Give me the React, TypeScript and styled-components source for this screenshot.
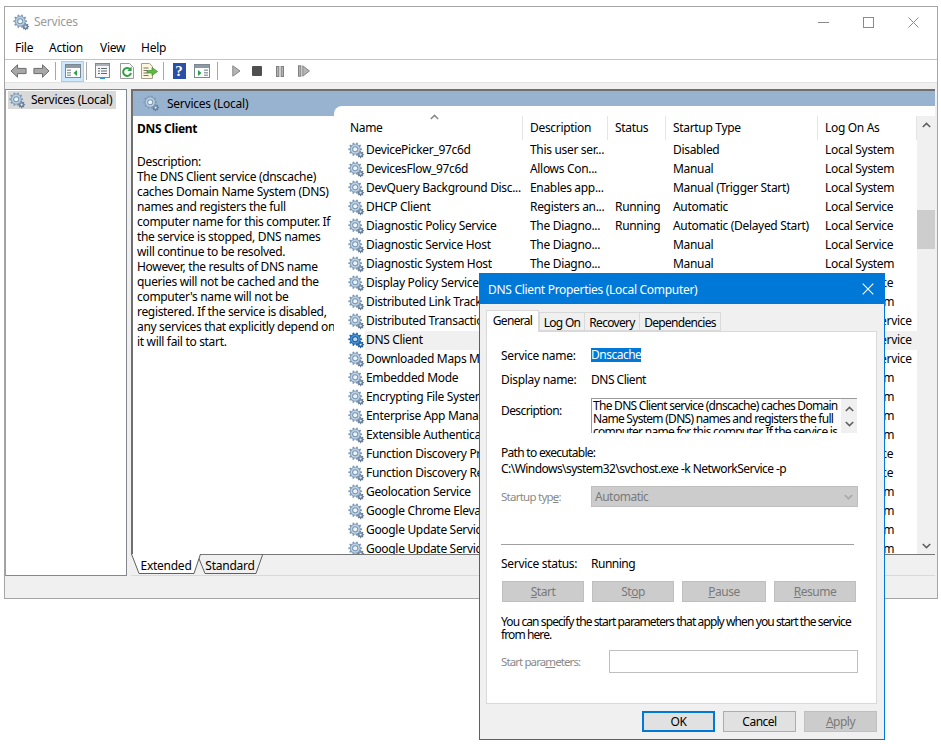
import React from 'react';
import styled, { createGlobalStyle } from 'styled-components';

const font = `"Noto Sans", "Open Sans", sans-serif`;

const GlobalStyle = createGlobalStyle`
  html, body {
    margin: 0;
    padding: 0;
    background: #fff;
    font-family: ${font};
    font-size: 12px;
    letter-spacing: -0.25px;
    color: #000;
  }
  #root {
    position: relative;
    width: 941px;
    height: 744px;
    overflow: hidden;
  }
`;

type Service = {
  name: string;
  desc?: string;
  status?: string;
  startup?: string;
  logon: string;
  selected?: boolean;
};

const services: Service[] = [
  { name: 'DevicePicker_97c6d', desc: 'This user ser...', startup: 'Disabled', logon: 'Local System' },
  { name: 'DevicesFlow_97c6d', desc: 'Allows Con...', startup: 'Manual', logon: 'Local System' },
  { name: 'DevQuery Background Disc...', desc: 'Enables app...', startup: 'Manual (Trigger Start)', logon: 'Local System' },
  { name: 'DHCP Client', desc: 'Registers an...', status: 'Running', startup: 'Automatic', logon: 'Local Service' },
  { name: 'Diagnostic Policy Service', desc: 'The Diagno...', status: 'Running', startup: 'Automatic (Delayed Start)', logon: 'Local Service' },
  { name: 'Diagnostic Service Host', desc: 'The Diagno...', startup: 'Manual', logon: 'Local Service' },
  { name: 'Diagnostic System Host', desc: 'The Diagno...', startup: 'Manual', logon: 'Local System' },
  { name: 'Display Policy Service', logon: 'Local Service' },
  { name: 'Distributed Link Tracking Client', logon: 'Local System' },
  { name: 'Distributed Transaction Coordinator', logon: 'Network Service' },
  { name: 'DNS Client', logon: 'Network Service', selected: true },
  { name: 'Downloaded Maps Manager', logon: 'Network Service' },
  { name: 'Embedded Mode', logon: 'Local System' },
  { name: 'Encrypting File System (EFS)', logon: 'Local System' },
  { name: 'Enterprise App Management', logon: 'Local System' },
  { name: 'Extensible Authentication', logon: 'Local System' },
  { name: 'Function Discovery Provider', logon: 'Local Service' },
  { name: 'Function Discovery Resource', logon: 'Local Service' },
  { name: 'Geolocation Service', logon: 'Local System' },
  { name: 'Google Chrome Elevation', logon: 'Local System' },
  { name: 'Google Update Service', logon: 'Local System' },
  { name: 'Google Update Service', logon: 'Local System' },
];

const descriptionLines = [
  'The DNS Client service (dnscache)',
  'caches Domain Name System (DNS)',
  'names and registers the full',
  'computer name for this computer. If',
  'the service is stopped, DNS names',
  'will continue to be resolved.',
  'However, the results of DNS name',
  'queries will not be cached and the',
  "computer's name will not be",
  'registered. If the service is disabled,',
  'any services that explicitly depend on',
  'it will fail to start.',
];

const gearPath = (cx: number, cy: number, outer: number, inner: number, teeth: number) => {
  const pts: string[] = [];
  const step = (Math.PI * 2) / teeth;
  for (let i = 0; i < teeth; i++) {
    const a = i * step;
    const corners: [number, number][] = [
      [a - step * 0.3, inner],
      [a - step * 0.16, outer],
      [a + step * 0.16, outer],
      [a + step * 0.3, inner],
    ];
    corners.forEach(([t, r]) => {
      pts.push(`${(cx + Math.cos(t) * r).toFixed(2)} ${(cy + Math.sin(t) * r).toFixed(2)}`);
    });
  }
  return `M${pts.join('L')}Z`;
};

const GearIcon = ({ selected }: { selected?: boolean }) => (
  <GearSvg viewBox="0 0 17 17" width={17} height={17}>
    <path d={gearPath(12.6, 12.6, 3.6, 2.7, 8)} fill={selected ? '#245f9e' : '#6b8199'} />
    <circle cx={12.6} cy={12.6} r={1.1} fill="#e4edf5" />
    <path d={gearPath(7.2, 7.2, 6.9, 5.4, 10)} fill={selected ? '#1f67b0' : '#7f9ab5'} />
    <circle cx={7.2} cy={7.2} r={4.6} fill={selected ? '#4f90cf' : '#bcd0e2'} />
    <circle cx={7.2} cy={7.2} r={3} fill={selected ? '#1d5c9e' : '#7595b3'} />
    <circle cx={7.2} cy={7.2} r={2} fill={selected ? '#bcd8f0' : '#eef3f8'} />
  </GearSvg>
);

const GearSvg = styled.svg`
  display: block;
  flex: none;
`;

const NavArrow = ({ flip }: { flip?: boolean }) => (
  <svg width={17} height={14} viewBox="0 0 17 14" style={flip ? { transform: 'scaleX(-1)' } : undefined}>
    <path d="M7.5.8 1 7l6.5 6.2V9.6h8.6V4.4H7.5z" fill="#a8a8a8" stroke="#6d6d6d" />
  </svg>
);

const ConsoleTreeIcon = () => (
  <svg width={16} height={14} viewBox="0 0 16 14">
    <rect x=".5" y=".5" width="15" height="13" fill="#fff" stroke="#7c8791" />
    <rect x="1" y="1" width="14" height="3" fill="#8d9aa6" />
    <rect x="2" y="5.5" width="4" height="1.5" fill="#9aa5af" />
    <rect x="2" y="8" width="4" height="1.5" fill="#9aa5af" />
    <rect x="2" y="10.5" width="4" height="1.5" fill="#9aa5af" />
    <path d="M12 6v6L8.5 9z" fill="#2f9e44" />
  </svg>
);

const ListIcon = () => (
  <svg width={15} height={16} viewBox="0 0 15 16">
    <rect x=".5" y=".5" width="14" height="14" fill="#f6f6f6" stroke="#7f8790" />
    <rect x="1" y="1" width="13" height="2" fill="#aab2ba" />
    <path d="M3 5.5h2M6 5.5h6M3 8h2M6 8h6M3 10.5h2M6 10.5h6" stroke="#5f6b78" />
    <rect x="5" y="14" width="5" height="2" fill="#2c9be0" />
  </svg>
);

const RefreshIcon = () => (
  <svg width={14} height={16} viewBox="0 0 14 16">
    <path d="M.5.5h9l4 4v11H.5z" fill="#fbfbfb" stroke="#9a9a9a" />
    <path d="M10.3 6.4A4 4 0 1 0 11 10" fill="none" stroke="#2f9e44" strokeWidth="2" />
    <path d="M11.6 3.5v4.4H7.4z" fill="#2f9e44" />
  </svg>
);

const ExportIcon = () => (
  <svg width={17} height={16} viewBox="0 0 17 16">
    <path d="M.5.5h8l3 3v12h-11z" fill="#fdf6dc" stroke="#a3a08e" />
    <path d="M2.5 5h5M2.5 7.5h4M2.5 10h4M2.5 12.5h5" stroke="#77756a" />
    <path d="M6 7.5h5V4.5l5.5 4-5.5 4V10H6z" fill="#62b946" stroke="#3c8f2a" strokeWidth=".7" />
  </svg>
);

const ViewIcon = () => (
  <svg width={16} height={14} viewBox="0 0 16 14">
    <rect x=".5" y=".5" width="15" height="13" fill="#fff" stroke="#7c8791" />
    <rect x="1" y="1" width="14" height="3" fill="#8d9aa6" />
    <rect x="10" y="5.5" width="4" height="1.5" fill="#9aa5af" />
    <rect x="10" y="8" width="4" height="1.5" fill="#9aa5af" />
    <rect x="10" y="10.5" width="4" height="1.5" fill="#9aa5af" />
    <path d="M4 6v6l3.5-3z" fill="#2f9e44" />
  </svg>
);

const PlayIcon = () => (
  <svg width={9} height={12} viewBox="0 0 9 12">
    <path d="M.8.8 8 6 .8 11.2z" fill="#b5b5b5" stroke="#858585" />
  </svg>
);

const StopIcon = () => (
  <svg width={10} height={10} viewBox="0 0 10 10">
    <rect width="10" height="10" rx="1" fill="#4f4f4f" />
  </svg>
);

const PauseIcon = () => (
  <svg width={8} height={11} viewBox="0 0 8 11">
    <rect x=".5" y=".5" width="2.4" height="10" fill="#b0b0b0" stroke="#808080" />
    <rect x="5.1" y=".5" width="2.4" height="10" fill="#b0b0b0" stroke="#808080" />
  </svg>
);

const ResumeIcon = () => (
  <svg width={12} height={12} viewBox="0 0 12 12">
    <rect x=".5" y=".8" width="2.4" height="10.4" fill="#b0b0b0" stroke="#808080" />
    <path d="M4.8.8 11.4 6l-6.6 5.2z" fill="#b5b5b5" stroke="#858585" />
  </svg>
);

const Chevron = ({ up, color = '#606060' }: { up?: boolean; color?: string }) => (
  <svg width={9} height={6} viewBox="0 0 9 6" style={{ display: 'block' }}>
    <path d={up ? 'M.8 5 4.5 1.4 8.2 5' : 'M.8 1 4.5 4.6 8.2 1'} fill="none" stroke={color} strokeWidth="1.6" />
  </svg>
);

const TabOutline = ({ w, active }: { w: number; active?: boolean }) => (
  <TabSvg width={w} height={20} viewBox={`0 0 ${w} 20`}>
    <path
      d={`M.5 ${active ? 0 : 1} L8 19.5 H${w - 7} L${w - 0.5} ${active ? 0 : 1}`}
      fill={active ? '#fff' : '#f0f0f0'}
      stroke="#5f5f5f"
    />
  </TabSvg>
);

const TabSvg = styled.svg`
  position: absolute;
  left: 0;
  top: 0;
`;

export default function App() {
  return (
    <>
      <GlobalStyle />
      <Window>
        <TitleBar>
          <TitleIcon><GearIcon /></TitleIcon>
          <TitleText>Services</TitleText>
          <WindowControls>
            <svg width={11} height={11} viewBox="0 0 11 11"><path d="M0 5.5h11" stroke="#8a8a8a" /></svg>
            <svg width={11} height={11} viewBox="0 0 11 11"><rect x=".5" y=".5" width="10" height="10" fill="none" stroke="#8a8a8a" /></svg>
            <svg width={11} height={11} viewBox="0 0 11 11"><path d="M.5.5l10 10M10.5.5l-10 10" stroke="#8a8a8a" /></svg>
          </WindowControls>
        </TitleBar>
        <MenuBar>
          <MenuItem $w={34}>File</MenuItem>
          <MenuItem $w={51}>Action</MenuItem>
          <MenuItem $w={41}>View</MenuItem>
          <MenuItem $w={40}>Help</MenuItem>
        </MenuBar>
        <Toolbar>
          <ToolSlot $w={23}><NavArrow /></ToolSlot>
          <ToolSlot $w={23}><NavArrow flip /></ToolSlot>
          <ToolSep />
          <ActiveTool><ConsoleTreeIcon /></ActiveTool>
          <ToolSep />
          <ToolSlot $w={21}><ListIcon /></ToolSlot>
          <ToolSlot $w={27}><RefreshIcon /></ToolSlot>
          <ToolSlot $w={18}><ExportIcon /></ToolSlot>
          <ToolSlot $w={3} />
          <ToolSep />
          <ToolSlot $w={20}><HelpBox>?</HelpBox></ToolSlot>
          <ToolSlot $w={26}><ViewIcon /></ToolSlot>
          <ToolSep />
          <ToolSlot $w={26}><PlayIcon /></ToolSlot>
          <ToolSlot $w={16}><StopIcon /></ToolSlot>
          <ToolSlot $w={30}><PauseIcon /></ToolSlot>
          <ToolSlot $w={18}><ResumeIcon /></ToolSlot>
        </Toolbar>
        <Body>
          <TreePane>
            <TreeItem>
              <GearIcon />
              <span>Services (Local)</span>
            </TreeItem>
          </TreePane>
          <ResultPane>
            <ResultHeader>
              <GearIcon />
              <span>Services (Local)</span>
            </ResultHeader>
            <ResultContent>
              <DescriptionPane>
                <ServiceTitle>DNS Client</ServiceTitle>
                <div>Description:</div>
                {descriptionLines.map((line) => (
                  <DescriptionLine key={line}>{line}</DescriptionLine>
                ))}
              </DescriptionPane>
              <ListPanel>
                <ListColumn>
                  <ColumnHeaders>
                    <SortCaret><Chevron up color="#8a8a8a" /></SortCaret>
                    <HeaderCell $w={189} $pad={16}>Name</HeaderCell>
                    <HeaderCell $w={85}>Description</HeaderCell>
                    <HeaderCell $w={58}>Status</HeaderCell>
                    <HeaderCell $w={152}>Startup Type</HeaderCell>
                    <HeaderCell $w={99}>Log On As</HeaderCell>
                  </ColumnHeaders>
                  <Rows>
                    {services.map((s, i) => (
                      <Row key={`${s.name}-${i}`}>
                        <NameCell $selected={s.selected}>
                          <GearIcon selected={s.selected} />
                          <NameText>{s.name}</NameText>
                        </NameCell>
                        <Cell $w={85} $selected={s.selected}>{s.desc}</Cell>
                        <Cell $w={58} $selected={s.selected}>{s.status}</Cell>
                        <Cell $w={152} $selected={s.selected}>{s.startup}</Cell>
                        <Cell $w={99} $selected={s.selected}>{s.logon}</Cell>
                      </Row>
                    ))}
                  </Rows>
                </ListColumn>
                <ScrollBar>
                  <ScrollArrow><Chevron up /></ScrollArrow>
                  <ScrollTrack>
                    <ScrollThumb />
                  </ScrollTrack>
                  <ScrollArrow><Chevron /></ScrollArrow>
                </ScrollBar>
              </ListPanel>
            </ResultContent>
            <TabStrip>
              <ViewTab $w={70} $active>
                <TabOutline w={70} active />
                <TabLabel>Extended</TabLabel>
              </ViewTab>
              <ViewTab $w={66}>
                <TabOutline w={66} />
                <TabLabel>Standard</TabLabel>
              </ViewTab>
            </TabStrip>
          </ResultPane>
        </Body>
        <StatusBar />
      </Window>

      <Dialog>
        <DialogTitle>
          <span>DNS Client Properties (Local Computer)</span>
          <svg width={12} height={12} viewBox="0 0 12 12"><path d="M.7.7l10.6 10.6M11.3.7.7 11.3" stroke="#fff" strokeWidth="1.1" /></svg>
        </DialogTitle>
        <DialogBody>
          <DialogTabs>
            <DialogTab $active $w={53}>General</DialogTab>
            <DialogTab $w={46}>Log On</DialogTab>
            <DialogTab $w={56}>Recovery</DialogTab>
            <DialogTab $w={82}>Dependencies</DialogTab>
          </DialogTabs>
          <TabPanel>
            <FieldRow $h={24} $top={11}>
              <FieldLabel>Service name:</FieldLabel>
              <SelectedText>Dnscache</SelectedText>
            </FieldRow>
            <FieldRow $h={24}>
              <FieldLabel>Display name:</FieldLabel>
              <span>DNS Client</span>
            </FieldRow>
            <DescriptionField>
              <FieldLabel>Description:</FieldLabel>
              <DescriptionBox>
                <DescriptionBoxText>
                  The DNS Client service (dnscache) caches Domain<br />
                  Name System (DNS) names and registers the full<br />
                  computer name for this computer. If the service is
                </DescriptionBoxText>
                <BoxScroll>
                  <Chevron up />
                  <Chevron />
                </BoxScroll>
              </DescriptionBox>
            </DescriptionField>
            <PathLabel>Path to executable:</PathLabel>
            <PathValue>C:\Windows\system32\svchost.exe -k NetworkService -p</PathValue>
            <StartupRow>
              <DisabledLabel>Startup typ<u>e</u>:</DisabledLabel>
              <SelectBox>
                <span>Automatic</span>
                <Chevron color="#a8a8a8" />
              </SelectBox>
            </StartupRow>
            <Divider />
            <FieldRow $h={20}>
              <FieldLabel>Service status:</FieldLabel>
              <span>Running</span>
            </FieldRow>
            <ControlRow>
              <DisabledButton $w={82}><u>S</u>tart</DisabledButton>
              <DisabledButton $w={82}>St<u>o</u>p</DisabledButton>
              <DisabledButton $w={84}><u>P</u>ause</DisabledButton>
              <DisabledButton $w={82}><u>R</u>esume</DisabledButton>
            </ControlRow>
            <HelpText>
              You can specify the start parameters that apply when you start the service<br />
              from here.
            </HelpText>
            <ParamRow>
              <ParamLabel>Start para<u>m</u>eters:</ParamLabel>
              <ParamInput />
            </ParamRow>
          </TabPanel>
          <DialogFooter>
            <FooterButton $primary>OK</FooterButton>
            <FooterButton>Cancel</FooterButton>
            <FooterButton $disabled><u>A</u>pply</FooterButton>
          </DialogFooter>
        </DialogBody>
      </Dialog>
    </>
  );
}

const Window = styled.div`
  position: absolute;
  left: 4px;
  top: 6px;
  width: 934px;
  height: 593px;
  box-sizing: border-box;
  border: 1px solid #a5a5a5;
  background: #fff;
  display: flex;
  flex-direction: column;
`;

const TitleBar = styled.div`
  height: 30px;
  margin-bottom: 1px;
  display: flex;
  align-items: center;
  flex: none;
`;

const TitleIcon = styled.div`
  margin-left: 8px;
  margin-right: 4px;
`;

const TitleText = styled.div`
  color: #9a9a9a;
  flex: 1;
  margin-top: -1px;
`;

const WindowControls = styled.div`
  display: flex;
  gap: 34px;
  margin-right: 18px;
  align-items: center;
`;

const MenuBar = styled.div`
  height: 19px;
  padding-bottom: 2px;
  flex: none;
  display: flex;
  align-items: center;
  padding-left: 10px;
  border-bottom: 1px solid #c4c4c4;
`;

const MenuItem = styled.div<{ $w: number }>`
  width: ${(p) => p.$w}px;
  flex: none;
`;

const Toolbar = styled.div`
  height: 22px;
  flex: none;
  display: flex;
  align-items: center;
  padding-left: 2px;
  border-bottom: 1px solid #e3e3e3;
`;

const ToolSlot = styled.div<{ $w: number }>`
  width: ${(p) => p.$w}px;
  height: 22px;
  display: flex;
  align-items: center;
  justify-content: center;
  flex: none;
`;

const ToolSep = styled.div`
  width: 1px;
  height: 18px;
  margin: 0 5px 0 2px;
  background: #a8a8a8;
  flex: none;
`;

const ActiveTool = styled.div`
  width: 23px;
  height: 21px;
  box-sizing: border-box;
  border: 1px solid #99d1ff;
  background: #cce8ff;
  display: flex;
  align-items: center;
  justify-content: center;
  flex: none;
`;

const HelpBox = styled.div`
  width: 13px;
  height: 16px;
  background: #2a4fa8;
  color: #fff;
  font: bold 15px/16px "Liberation Serif", serif;
  text-align: center;
  letter-spacing: 0;
`;

const Body = styled.div`
  flex: 1;
  min-height: 0;
  display: flex;
  background: #f0f0f0;
  padding-top: 6px;
`;

const TreePane = styled.div`
  width: 122px;
  box-sizing: border-box;
  margin-right: 4px;
  background: #fff;
  border: 1px solid #828790;
  border-left-color: #a0a0a0;
  padding: 1px;
  flex: none;
`;

const TreeItem = styled.div`
  height: 18px;
  width: 108px;
  margin-left: 1px;
  background: #d9d9d9;
  display: flex;
  align-items: center;
  gap: 5px;
  padding-left: 1px;
  box-sizing: border-box;
  line-height: 16px;
  white-space: nowrap;
`;

const ResultPane = styled.div`
  flex: 1;
  min-width: 0;
  display: flex;
  flex-direction: column;
  border-top: 2px solid #6f6f6f;
  border-left: 2px solid #6f6f6f;
  margin-right: 2px;
`;

const ResultHeader = styled.div`
  height: 25px;
  flex: none;
  box-sizing: border-box;
  background: #98b3d0;
  display: flex;
  align-items: center;
  gap: 7px;
  padding-left: 10px;
`;

const ResultContent = styled.div`
  flex: 1;
  min-height: 0;
  display: flex;
  background: #fff;
`;

const DescriptionPane = styled.div`
  width: 201px;
  box-sizing: border-box;
  flex: none;
  padding: 5px 0 0 4px;
  line-height: 15px;
  letter-spacing: -0.32px;
`;

const ServiceTitle = styled.div`
  font-weight: 700;
  margin-bottom: 18px;
`;

const DescriptionLine = styled.div`
  white-space: nowrap;
`;

const ListPanel = styled.div`
  flex: 1;
  min-width: 0;
  margin-top: -10px;
  background: #fff;
  border-top-left-radius: 8px;
  display: flex;
  overflow: hidden;
  position: relative;
`;

const ListColumn = styled.div`
  width: 583px;
  flex: none;
  display: flex;
  flex-direction: column;
  overflow: hidden;
  letter-spacing: -0.32px;
`;

const ColumnHeaders = styled.div`
  height: 35px;
  flex: none;
  display: flex;
  padding-top: 10px;
  box-sizing: border-box;
  position: relative;
`;

const SortCaret = styled.div`
  position: absolute;
  left: 96px;
  top: 8px;
`;

const HeaderCell = styled.div<{ $w: number; $pad?: number }>`
  width: ${(p) => p.$w}px;
  box-sizing: border-box;
  height: 24px;
  line-height: 24px;
  padding-left: ${(p) => p.$pad ?? 7}px;
  border-right: 1px solid #e5e5e5;
  flex: none;
`;

const Rows = styled.div`
  flex: 1;
  min-height: 0;
  overflow: hidden;
`;

const Row = styled.div`
  height: 19px;
  display: flex;
  align-items: center;
  white-space: nowrap;
`;

const NameCell = styled.div<{ $selected?: boolean }>`
  width: 189px;
  height: 19px;
  flex: none;
  display: flex;
  align-items: flex-start;
  gap: 1px;
  padding: 1px 0 0 14px;
  box-sizing: border-box;
  overflow: hidden;
  background: ${(p) => (p.$selected ? 'linear-gradient(90deg, #fff 31px, #f0f0f0 31px)' : 'transparent')};
`;

const NameText = styled.span`
  line-height: 17px;
  margin-top: -1px;
`;

const Cell = styled.div<{ $w: number; $selected?: boolean }>`
  width: ${(p) => p.$w}px;
  height: 19px;
  line-height: 18px;
  flex: none;
  padding-left: 7px;
  box-sizing: border-box;
  overflow: hidden;
  background: ${(p) => (p.$selected ? '#f0f0f0' : 'transparent')};
`;

const ScrollBar = styled.div`
  width: 18px;
  flex: none;
  margin-top: 10px;
  background: #f0f0f0;
  display: flex;
  flex-direction: column;
`;

const ScrollArrow = styled.div`
  height: 17px;
  flex: none;
  display: flex;
  align-items: center;
  justify-content: center;
`;

const ScrollTrack = styled.div`
  flex: 1;
  padding-top: 77px;
`;

const ScrollThumb = styled.div`
  height: 39px;
  background: #cdcdcd;
`;

const TabStrip = styled.div`
  height: 20px;
  flex: none;
  display: flex;
  margin-left: -2px;
  background: #f0f0f0;
  border-top: 1px solid #777;
  border-bottom: 1px solid #d9d9d9;
`;

const ViewTab = styled.div<{ $active?: boolean; $w: number }>`
  position: relative;
  width: ${(p) => p.$w}px;
  height: 20px;
  margin-top: -1px;
  margin-right: -4px;
  flex: none;
  z-index: ${(p) => (p.$active ? 1 : 0)};
`;

const TabLabel = styled.div`
  position: relative;
  text-align: center;
  line-height: 20px;
  padding-top: 2px;
`;

const StatusBar = styled.div`
  height: 22px;
  flex: none;
  background: #f0f0f0;
`;

const Dialog = styled.div`
  position: absolute;
  left: 479px;
  top: 273px;
  width: 406px;
  height: 467px;
  box-sizing: border-box;
  border: 1px solid #0078d7;
  background: #f0f0f0;
  display: flex;
  flex-direction: column;
  letter-spacing: -0.5px;
`;

const DialogTitle = styled.div`
  height: 30px;
  flex: none;
  background: #0078d7;
  color: #fff;
  display: flex;
  align-items: center;
  justify-content: space-between;
  padding: 0 10px 0 8px;
  letter-spacing: -0.3px;
`;

const DialogBody = styled.div`
  flex: 1;
  min-height: 0;
  display: flex;
  flex-direction: column;
  padding: 6px 7px 0 6px;
`;

const DialogTabs = styled.div`
  display: flex;
  height: 21px;
  flex: none;
  align-items: flex-end;
  position: relative;
  z-index: 1;
  letter-spacing: -0.7px;
`;

const DialogTab = styled.div<{ $active?: boolean; $w: number }>`
  width: ${(p) => p.$w}px;
  height: ${(p) => (p.$active ? 22 : 19)}px;
  line-height: 19px;
  text-align: center;
  box-sizing: border-box;
  background: ${(p) => (p.$active ? '#fff' : '#f0f0f0')};
  border: 1px solid #d9d9d9;
  border-bottom: ${(p) => (p.$active ? 'none' : '1px solid #d9d9d9')};
  margin-right: ${(p) => (p.$active ? 0 : -1)}px;
  margin-bottom: ${(p) => (p.$active ? -1 : 0)}px;
  flex: none;
`;

const TabPanel = styled.div`
  height: 373px;
  box-sizing: border-box;
  flex: none;
  background: #fff;
  border: 1px solid #d9d9d9;
  padding: 0 14px;
`;

const FieldRow = styled.div<{ $h: number; $top?: number }>`
  display: flex;
  align-items: center;
  height: ${(p) => p.$h}px;
  margin-top: ${(p) => p.$top ?? 0}px;
`;

const FieldLabel = styled.div`
  width: 90px;
  flex: none;
  letter-spacing: -0.3px;
`;

const SelectedText = styled.span`
  background: #0078d7;
  color: #fff;
  line-height: 14px;
`;

const DescriptionField = styled.div`
  display: flex;
  margin-top: 7px;
  height: 36px;
  ${FieldLabel} { padding-top: 4px; letter-spacing: -0.6px; }
`;

const DescriptionBox = styled.div`
  width: 266px;
  height: 35px;
  box-sizing: border-box;
  border-top: 1px solid #9a9a9a;
  border-left: 1px solid #9a9a9a;
  display: flex;
  overflow: hidden;
`;

const DescriptionBoxText = styled.div`
  flex: 1;
  padding-left: 1px;
  line-height: 13px;
  white-space: nowrap;
  overflow: hidden;
  letter-spacing: -0.72px;
`;

const BoxScroll = styled.div`
  width: 16px;
  flex: none;
  background: #f0f0f0;
  display: flex;
  flex-direction: column;
  align-items: center;
  justify-content: space-around;
  padding: 2px 0;
  box-sizing: border-box;
`;

const PathLabel = styled.div`
  margin-top: 11px;
  line-height: 16px;
  letter-spacing: -0.7px;
`;

const PathValue = styled.div`
  line-height: 16px;
  letter-spacing: -0.54px;
`;

const StartupRow = styled.div`
  display: flex;
  align-items: center;
  margin-top: 9px;
  height: 21px;
`;

const DisabledLabel = styled.div`
  width: 90px;
  flex: none;
  color: #8a8a8a;
  font-size: 11.5px;
  letter-spacing: -0.75px;
`;

const SelectBox = styled.div`
  width: 267px;
  height: 21px;
  box-sizing: border-box;
  background: #cccccc;
  border: 1px solid #bfbfbf;
  color: #7a7a7a;
  display: flex;
  align-items: center;
  justify-content: space-between;
  padding: 0 4px 0 3px;
`;

const Divider = styled.div`
  height: 1px;
  width: 353px;
  background: #a0a0a0;
  margin: 37px 0 8px;
`;

const ControlRow = styled.div`
  display: flex;
  gap: 8px;
  margin: 8px 0 0 1px;
`;

const DisabledButton = styled.div<{ $w: number }>`
  width: ${(p) => p.$w}px;
  height: 21px;
  box-sizing: border-box;
  background: #cccccc;
  border: 1px solid #bfbfbf;
  color: #7a7a7a;
  line-height: 19px;
  text-align: center;
  flex: none;
`;

const HelpText = styled.div`
  margin-top: 13px;
  line-height: 13px;
  white-space: nowrap;
  letter-spacing: -0.9px;
`;

const ParamRow = styled.div`
  display: flex;
  align-items: center;
  margin-top: 9px;
  height: 23px;
`;

const ParamLabel = styled.div`
  width: 108px;
  flex: none;
  color: #8a8a8a;
  font-size: 11.5px;
  letter-spacing: -0.9px;
`;

const ParamInput = styled.div`
  width: 249px;
  height: 23px;
  box-sizing: border-box;
  border: 1px solid #bfbfbf;
  background: #fff;
`;

const DialogFooter = styled.div`
  display: flex;
  gap: 8px;
  justify-content: flex-end;
  margin-top: 7px;
`;

const FooterButton = styled.div<{ $primary?: boolean; $disabled?: boolean }>`
  width: 73px;
  height: 21px;
  box-sizing: border-box;
  line-height: ${(p) => (p.$primary ? 17 : 19)}px;
  text-align: center;
  background: ${(p) => (p.$disabled ? '#cccccc' : '#e1e1e1')};
  border: ${(p) => (p.$primary ? '2px solid #0078d7' : p.$disabled ? '1px solid #bfbfbf' : '1px solid #adadad')};
  color: ${(p) => (p.$disabled ? '#7a7a7a' : '#000')};
`;
